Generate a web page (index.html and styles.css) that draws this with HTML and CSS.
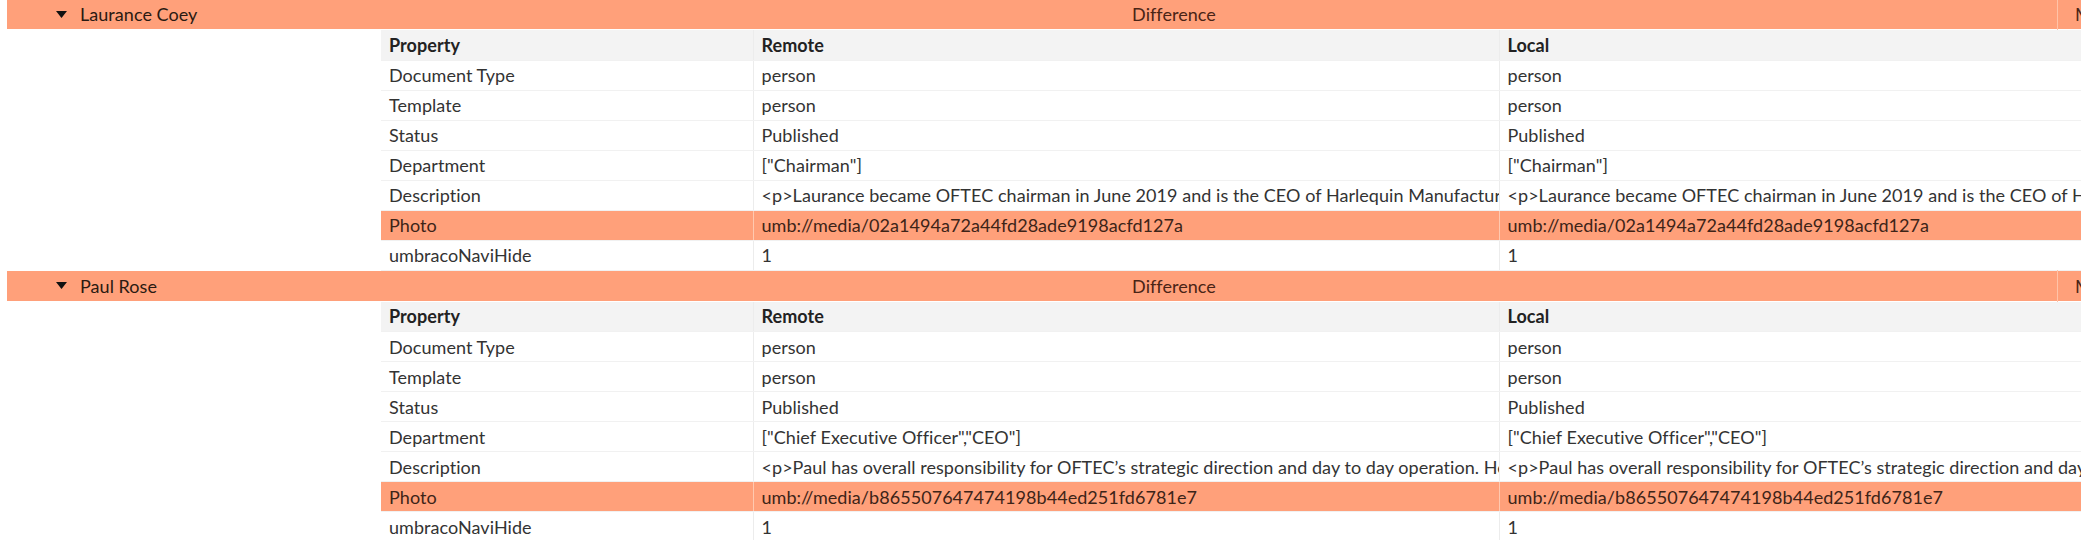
FILE: index.html
```html
<!DOCTYPE html>
<html>
<head>
<meta charset="utf-8">
<link rel="stylesheet" href="styles.css">
</head>
<body>
<div class="page">
  <section class="group first">
    <div class="group-head">
      <div class="group-name">
        <svg class="caret" width="11" height="7" viewBox="0 0 11 7"><polygon points="0,0 11,0 5.5,7" fill="#111"/></svg>
        <span>Laurance Coey</span>
      </div>
      <div class="group-diff">Difference</div>
      <div class="group-spacer"></div>
      <div class="group-btn">Merge</div>
    </div>
    <table class="props">
      <colgroup><col class="c1"><col class="c2"><col class="c3"></colgroup>
      <thead>
        <tr><th>Property</th><th>Remote</th><th>Local</th></tr>
      </thead>
      <tbody>
        <tr><td>Document Type</td><td>person</td><td>person</td></tr>
        <tr><td>Template</td><td>person</td><td>person</td></tr>
        <tr><td>Status</td><td>Published</td><td>Published</td></tr>
        <tr><td>Department</td><td>["Chairman"]</td><td>["Chairman"]</td></tr>
        <tr><td>Description</td><td>&lt;p&gt;Laurance became OFTEC chairman in June 2019 and is the CEO of Harlequin Manufacturing Ltd, a leading manufacturer of plastic oil storage tanks.&lt;/p&gt;</td><td>&lt;p&gt;Laurance became OFTEC chairman in June 2019 and is the CEO of Harlequin Manufacturing Ltd, a leading manufacturer of plastic oil storage tanks.&lt;/p&gt;</td></tr>
        <tr class="changed"><td>Photo</td><td>umb://media/02a1494a72a44fd28ade9198acfd127a</td><td>umb://media/02a1494a72a44fd28ade9198acfd127a</td></tr>
        <tr><td>umbracoNaviHide</td><td>1</td><td>1</td></tr>
      </tbody>
    </table>
  </section>
  <section class="group">
    <div class="group-head">
      <div class="group-name">
        <svg class="caret" width="11" height="7" viewBox="0 0 11 7"><polygon points="0,0 11,0 5.5,7" fill="#111"/></svg>
        <span>Paul Rose</span>
      </div>
      <div class="group-diff">Difference</div>
      <div class="group-spacer"></div>
      <div class="group-btn">Merge</div>
    </div>
    <table class="props">
      <colgroup><col class="c1"><col class="c2"><col class="c3"></colgroup>
      <thead>
        <tr><th>Property</th><th>Remote</th><th>Local</th></tr>
      </thead>
      <tbody>
        <tr><td>Document Type</td><td>person</td><td>person</td></tr>
        <tr><td>Template</td><td>person</td><td>person</td></tr>
        <tr><td>Status</td><td>Published</td><td>Published</td></tr>
        <tr><td>Department</td><td>["Chief Executive Officer","CEO"]</td><td>["Chief Executive Officer","CEO"]</td></tr>
        <tr><td>Description</td><td>&lt;p&gt;Paul has overall responsibility for OFTEC’s strategic direction and day to day operation. He is also a director of OFTEC Ltd and represents the industry.&lt;/p&gt;</td><td>&lt;p&gt;Paul has overall responsibility for OFTEC’s strategic direction and day to day operation. He is also a director of OFTEC Ltd and represents the industry.&lt;/p&gt;</td></tr>
        <tr class="changed"><td>Photo</td><td>umb://media/b865507647474198b44ed251fd6781e7</td><td>umb://media/b865507647474198b44ed251fd6781e7</td></tr>
        <tr><td>umbracoNaviHide</td><td>1</td><td>1</td></tr>
      </tbody>
    </table>
  </section>
</div>
</body>
</html>
```
FILE: styles.css
```css
html, body {
  margin: 0;
  padding: 0;
  overflow: hidden;
  background: #fff;
}
body {
  font-family: Lato, "Open Sans", sans-serif;
  font-size: 18px;
  color: #333;
  letter-spacing: 0.05px;
}
.page {
  padding-left: 7px;
  width: 2400px;
}
.group.first {
  margin-top: -1px;
}
.group-head {
  display: flex;
  align-items: center;
  height: 30px;
  background: #ffa07a;
  color: #2a1a12;
  margin-bottom: 1px;
}
.group-name {
  width: 374px;
  box-sizing: border-box;
  padding-left: 49px;
  display: flex;
  align-items: center;
  gap: 13px;
}
.caret {
  display: block;
}
.group-diff {
  width: 1586px;
  text-align: center;
  color: #4a2416;
}
.group-spacer {
  width: 90px;
}
.group-btn {
  height: 32px;
  box-sizing: border-box;
  border-left: 1px solid #ffc3a8;
  padding: 0 17px;
  display: flex;
  align-items: center;
  color: #4a2416;
}
.props {
  margin-left: 374px;
  border-collapse: collapse;
  table-layout: fixed;
  width: 1864px;
}
.c1 { width: 372px; }
.c2 { width: 746px; }
.c3 { width: 746px; }
.props th, .props td {
  height: 30px;
  box-sizing: border-box;
  padding: 0 8px;
  text-align: left;
  white-space: nowrap;
  overflow: hidden;
  border-right: 1px solid #ececec;
  border-bottom: 1px solid #f1f1f1;
}
.props th {
  background: #f3f3f3;
  font-weight: 700;
  color: #222;
}
.props tr.changed td {
  background: #ffa07a;
  color: #3d2418;
  border-right-color: #ffc9b0;
}
```
